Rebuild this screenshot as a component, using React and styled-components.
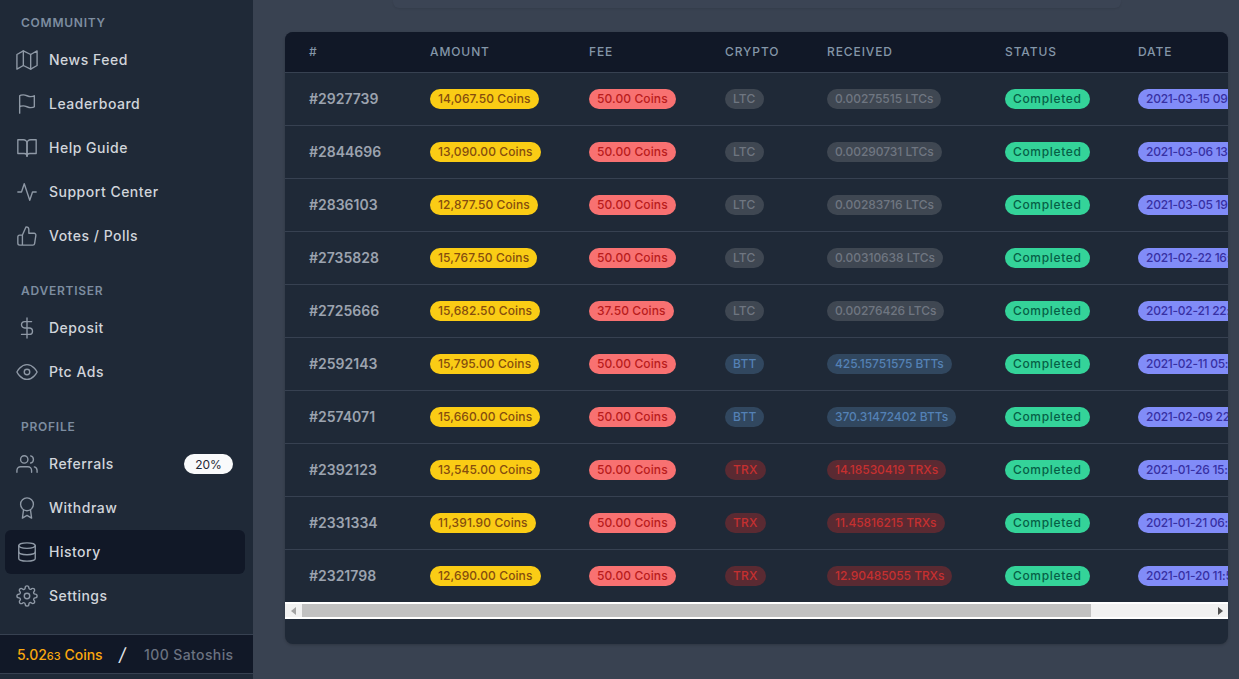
import React from "react";
import styled, { createGlobalStyle } from "styled-components";
import { FiMap, FiFlag, FiBookOpen, FiActivity, FiThumbsUp, FiDollarSign, FiEye, FiUsers, FiAward, FiDatabase, FiSettings } from "react-icons/fi";

const Global = createGlobalStyle`
  * { box-sizing: border-box; }
  html, body { margin: 0; height: 100%; overflow: hidden; background: #374151; }
  body { font-family: Inter, "Noto Sans", "Liberation Sans", sans-serif; }
`;

const Shell = styled.div`
  display: flex;
  width: 1239px;
  height: 679px;
  overflow: hidden;
  background: #394251;
`;
const Sidebar = styled.aside`
  flex: 0 0 253px;
  display: flex;
  flex-direction: column;
  background: #1f2937;
  padding-top: 14px;
`;
const Section = styled.section`
  margin-bottom: 24px;
  &:last-of-type { margin-bottom: 16px; }
`;
const Heading = styled.h3`
  margin: 0 0 8px;
  padding-left: 21px;
  height: 16px;
  font-size: 12px;
  line-height: 18px;
  font-weight: 600;
  letter-spacing: 0.75px;
  text-transform: uppercase;
  color: #7d8da0;
`;
const NavItem = styled.a`
  display: flex;
  align-items: center;
  gap: 11px;
  height: 44px;
  margin: 0 8px 0 5px;
  padding: 0 12px 0 11px;
  border-radius: 6px;
  font-size: 14px;
  font-weight: 500;
  letter-spacing: 0.5px;
  color: #d1d5db;
  background: ${(p) => (p.$active ? "#111827" : "transparent")};
  svg { flex: none; width: 22px; height: 22px; stroke-width: 1.5; color: #8f99a6; }
`;
const NavLabel = styled.span`
  flex: 1;
  padding-bottom: 2px;
`;
const Pill = styled.span`
  display: flex;
  align-items: center;
  justify-content: center;
  width: 49px;
  height: 20px;
  border-radius: 10px;
  background: #f9fafb;
  color: #1f2937;
  font-size: 12px;
  font-weight: 400;
  letter-spacing: 0;
`;
const Balance = styled.footer`
  display: flex;
  align-items: center;
  height: 40px;
  padding: 0 0 0 17px;
  background: #111827;
  border-top: 1px solid #374151;
  border-bottom: 1px solid #374151;
  font-size: 14px;
  font-weight: 500;
`;
const Coins = styled.span`
  width: 102px;
  color: #f9a80e;
  small { font-size: 11px; }
`;
const Slash = styled.span`
  width: 25px;
  color: #e5e7eb;
  font-style: italic;
  font-weight: 400;
  font-size: 18px;
`;
const Satoshis = styled.span`
  color: #6b7280;
  letter-spacing: 0.4px;
`;
const Main = styled.main`
  flex: 1;
  min-width: 0;
  padding-left: 32px;
`;
const TopCard = styled.div`
  width: 728px;
  height: 8px;
  margin-left: 108px;
  background: #3b4454;
  border-radius: 0 0 6px 6px;
  box-shadow: 0 1px 2px rgba(0, 0, 0, 0.08);
`;
const Card = styled.div`
  width: 943px;
  margin-top: 24px;
  border-radius: 8px;
  overflow: hidden;
  background: #1f2937;
  box-shadow: 0 1px 3px rgba(0, 0, 0, 0.2);
`;
const Table = styled.table`
  width: 1160px;
  table-layout: fixed;
  border-collapse: collapse;
`;
const Clip = styled.div`
  overflow: hidden;
`;
const Th = styled.th`
  width: ${(p) => p.$w}px;
  height: 40px;
  padding: 0 0 0 ${(p) => (p.$first ? 24 : 0)}px;
  text-align: left;
  background: #111827;
  border-bottom: 1px solid #374151;
  font-size: 12px;
  font-weight: 500;
  letter-spacing: 0.9px;
  text-transform: uppercase;
  color: #8496a8;
`;
const Row = styled.tr`
  height: 53px;
  border-bottom: 1px solid #374151;
  &:last-child { border-bottom: 0; }
`;
const Td = styled.td`
  padding: 0 0 1px;
  white-space: nowrap;
`;
const IdCell = styled(Td)`
  padding: 0 0 0 24px;
  font-size: 14px;
  font-weight: 600;
  letter-spacing: 0;
  color: #9ca3af;
`;
const palette = {
  yellow: ["#facc15", "#854d0e"],
  red: ["#f87171", "#b91c1c"],
  gray: ["#3f4752", "#6f7681"],
  blue: ["#31475f", "#5481b5"],
  trx: ["#5a2a32", "#c53030"],
  green: ["#34d399", "#065f46"],
  indigo: ["#818cf8", "#3730a3"],
};
const Badge = styled.span`
  display: inline-block;
  vertical-align: middle;
  height: 20px;
  padding: 0 8px;
  border-radius: 10px;
  font-size: 12px;
  line-height: 19px;
  font-weight: 500;
  letter-spacing: ${(p) => p.$ls ?? 0.1}px;
  background: ${(p) => palette[p.$tone][0]};
  color: ${(p) => palette[p.$tone][1]};
`;
const Scrollbar = styled.div`
  display: flex;
  align-items: center;
  height: 17px;
  background: #f1f1f1;
  border-top: 2px solid #fff;
  border-bottom: 2px solid #fff;
`;
const ScrollArrow = styled.button`
  flex: none;
  display: flex;
  align-items: center;
  justify-content: center;
  width: 17px;
  height: 13px;
  padding: 0;
  border: 0;
  background: transparent;
  svg { width: 6px; height: 8px; fill: ${(p) => p.$color}; }
`;
const Track = styled.div`
  flex: 1;
  height: 13px;
`;
const Thumb = styled.div`
  height: 13px;
  background: #c1c1c1;
`;
const CardFoot = styled.div`
  height: 25px;
`;

const groups = [
  { title: "Community", items: [["News Feed", FiMap], ["Leaderboard", FiFlag], ["Help Guide", FiBookOpen], ["Support Center", FiActivity], ["Votes / Polls", FiThumbsUp]] },
  { title: "Advertiser", items: [["Deposit", FiDollarSign], ["Ptc Ads", FiEye]] },
  { title: "Profile", items: [["Referrals", FiUsers, "20%"], ["Withdraw", FiAward], ["History", FiDatabase, null, true], ["Settings", FiSettings]] },
];
const cols = [["#", 145], ["Amount", 159], ["Fee", 136], ["Crypto", 102], ["Received", 178], ["Status", 133], ["Date", 307]];
const rows = [
  ["2927739", "14,067.50", "50.00", "LTC", "0.00275515", "2021-03-15 09:41:22"],
  ["2844696", "13,090.00", "50.00", "LTC", "0.00290731", "2021-03-06 13:12:05"],
  ["2836103", "12,877.50", "50.00", "LTC", "0.00283716", "2021-03-05 19:33:47"],
  ["2735828", "15,767.50", "50.00", "LTC", "0.00310638", "2021-02-22 16:08:19"],
  ["2725666", "15,682.50", "37.50", "LTC", "0.00276426", "2021-02-21 22:50:31"],
  ["2592143", "15,795.00", "50.00", "BTT", "425.15751575", "2021-02-11 05:27:44"],
  ["2574071", "15,660.00", "50.00", "BTT", "370.31472402", "2021-02-09 22:16:08"],
  ["2392123", "13,545.00", "50.00", "TRX", "14.18530419", "2021-01-26 15:39:52"],
  ["2331334", "11,391.90", "50.00", "TRX", "11.45816215", "2021-01-21 06:04:13"],
  ["2321798", "12,690.00", "50.00", "TRX", "12.90485055", "2021-01-20 11:55:26"],
];
const cryptoTone = { LTC: "gray", BTT: "blue", TRX: "trx" };

export default function App() {
  return (
    <Shell>
      <Global />
      <Sidebar>
        {groups.map((g) => (
          <Section key={g.title}>
            <Heading>{g.title}</Heading>
            {g.items.map(([label, Icon, pill, active]) => (
              <NavItem key={label} $active={active}>
                <Icon />
                <NavLabel>{label}</NavLabel>
                {pill && <Pill>{pill}</Pill>}
              </NavItem>
            ))}
          </Section>
        ))}
        <Balance>
          <Coins>5.02<small>63</small> Coins</Coins>
          <Slash>/</Slash>
          <Satoshis>100 Satoshis</Satoshis>
        </Balance>
      </Sidebar>
      <Main>
        <TopCard />
        <Card>
          <Clip>
            <Table>
              <thead>
                <tr>
                  {cols.map(([c, w], i) => (
                    <Th key={c} $w={w} $first={i === 0}>{c}</Th>
                  ))}
                </tr>
              </thead>
              <tbody>
                {rows.map((r) => (
                  <Row key={r[0]}>
                    <IdCell>#{r[0]}</IdCell>
                    <Td><Badge $tone="yellow">{r[1]} Coins</Badge></Td>
                    <Td><Badge $tone="red">{r[2]} Coins</Badge></Td>
                    <Td><Badge $tone={cryptoTone[r[3]]} $ls={0.2}>{r[3]}</Badge></Td>
                    <Td><Badge $tone={cryptoTone[r[3]]} $ls={-0.06}>{r[4]} {r[3]}s</Badge></Td>
                    <Td><Badge $tone="green" $ls={0.66}>Completed</Badge></Td>
                    <Td><Badge $tone="indigo" $ls={-0.25}>{r[5]}</Badge></Td>
                  </Row>
                ))}
              </tbody>
            </Table>
          </Clip>
          <Scrollbar>
            <ScrollArrow $color="#a3a3a3"><svg viewBox="0 0 6 8"><path d="M5 0v8L0 4z" /></svg></ScrollArrow>
            <Track>
              <Thumb style={{ width: `${(789 / 909) * 100}%` }} />
            </Track>
            <ScrollArrow $color="#505050"><svg viewBox="0 0 6 8"><path d="M1 0v8l5-4z" /></svg></ScrollArrow>
          </Scrollbar>
          <CardFoot />
        </Card>
      </Main>
    </Shell>
  );
}
